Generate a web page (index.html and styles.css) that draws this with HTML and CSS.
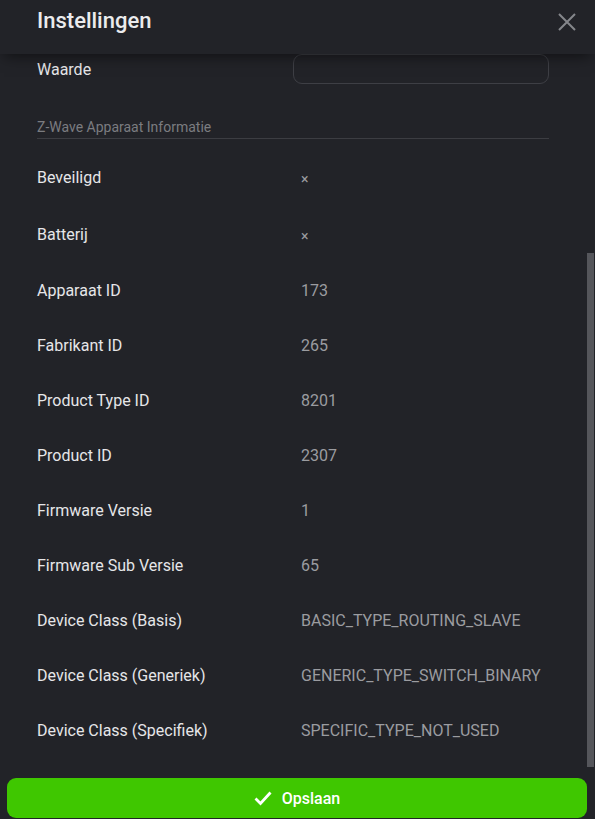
FILE: index.html
```html
<!DOCTYPE html>
<html lang="nl">
<head>
<meta charset="utf-8">
<title>Instellingen</title>
<link rel="stylesheet" href="styles.css">
</head>
<body>
<div class="dialog">
  <header class="header">
    <h1 class="title">Instellingen</h1>
    <button class="close" aria-label="Sluiten">
      <svg width="18" height="18" viewBox="0 0 18 18"><path d="M1 1L17 17M17 1L1 17" stroke="currentColor" stroke-width="2" fill="none"/></svg>
    </button>
  </header>
  <main class="content">
    <div class="row row-input">
      <div class="label">Waarde</div>
      <div class="input"></div>
    </div>
    <div class="section">Z-Wave Apparaat Informatie</div>
    <div class="row row-bool"><div class="label">Beveiligd</div><div class="value small">×</div></div>
    <div class="row row-bool"><div class="label">Batterij</div><div class="value small">×</div></div>
    <div class="row"><div class="label">Apparaat ID</div><div class="value">173</div></div>
    <div class="row"><div class="label">Fabrikant ID</div><div class="value">265</div></div>
    <div class="row"><div class="label">Product Type ID</div><div class="value">8201</div></div>
    <div class="row"><div class="label">Product ID</div><div class="value">2307</div></div>
    <div class="row"><div class="label">Firmware Versie</div><div class="value">1</div></div>
    <div class="row"><div class="label">Firmware Sub Versie</div><div class="value">65</div></div>
    <div class="row"><div class="label">Device Class (Basis)</div><div class="value">BASIC_TYPE_ROUTING_SLAVE</div></div>
    <div class="row"><div class="label">Device Class (Generiek)</div><div class="value">GENERIC_TYPE_SWITCH_BINARY</div></div>
    <div class="row"><div class="label">Device Class (Specifiek)</div><div class="value">SPECIFIC_TYPE_NOT_USED</div></div>
  </main>
  <div class="scrollbar"></div>
  <footer class="footer">
    <button class="save">
      <svg width="18" height="15" viewBox="0 0 18 15"><path d="M1.5 7.5L6.5 12.5L16.5 1.5" stroke="#fff" stroke-width="2.8" fill="none"/></svg>
      <span>Opslaan</span>
    </button>
  </footer>
</div>
</body>
</html>
```
FILE: styles.css
```css
* { box-sizing: border-box; }
html, body { margin: 0; padding: 0; }
body {
  background: #222328;
  font-family: Roboto, "Liberation Sans", sans-serif;
  color: #e8e8ea;
}
.dialog {
  position: relative;
  height: 819px;
  display: flex;
  flex-direction: column;
  overflow: hidden;
}
.header {
  position: relative;
  z-index: 2;
  height: 54px;
  flex: none;
  display: flex;
  align-items: flex-start;
  justify-content: space-between;
  padding: 0 19px 0 37px;
  background: #222328;
  box-shadow: 0 6px 14px -4px rgba(0, 0, 0, 0.55);
}
.title {
  margin: 8px 0 0;
  font-size: 22px;
  font-weight: 500;
  line-height: 26px;
  color: #ebebed;
}
.close {
  margin-top: 13px;
  padding: 0;
  border: 0;
  background: none;
  color: #85868b;
  width: 18px;
  height: 18px;
  display: flex;
}
.content {
  flex: 1;
  overflow: hidden;
  padding: 0 46px 0 37px;
}
.row {
  display: grid;
  grid-template-columns: 256px 1fr;
  align-items: center;
  height: 55px;
  font-size: 16px;
}
.row-bool { height: 57px; }
.row-input { height: 30px; }
.row-input + .section { margin-top: 35px; }
.label { color: #e6e6e8; }
.value {
  padding-left: 8px;
  color: #9b9ca0;
}
.value.small { font-size: 14px; padding-top: 2px; }
.input {
  height: 30px;
  border: 1px solid #3e3f45;
  border-radius: 9px;
}
.section {
  font-size: 14px;
  line-height: 17px;
  color: #7b7c80;
  padding-bottom: 2px;
  border-bottom: 1px solid #3c3d42;
  margin-bottom: 10px;
}
.scrollbar {
  position: absolute;
  right: 1px;
  top: 253px;
  width: 7px;
  height: 514px;
  background: #55565b;
}
.footer {
  flex: none;
  padding: 0 8px 1px 7px;
}
.save {
  width: 100%;
  height: 40px;
  border: 0;
  border-radius: 9px;
  background: #3fc700;
  color: #fff;
  font-family: Roboto, "Liberation Sans", sans-serif;
  font-size: 16px;
  font-weight: 500;
  display: flex;
  align-items: center;
  justify-content: center;
  gap: 10px;
  padding: 0;
}
```
